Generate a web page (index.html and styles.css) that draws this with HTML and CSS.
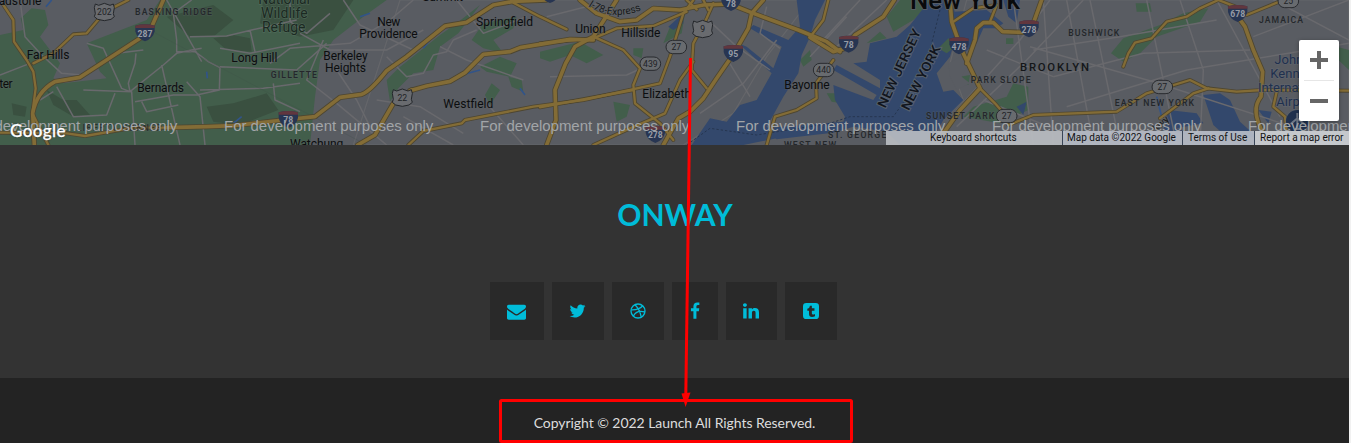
FILE: index.html
```html
<!DOCTYPE html>
<html lang="en">
<head>
<meta charset="utf-8">
<title>Onway</title>
<link rel="stylesheet" href="styles.css">
</head>
<body>
<div class="page">
<section class="map">
<svg class="map-canvas" viewBox="0 0 4047 435" preserveAspectRatio="none">
<defs>
<g id="major">
<path d="M490 0L455 80L420 115L240 232L165 245Q110 275 98 340L103 435"/>
<path d="M500 383L620 380L700 377L850 360L945 350L1020 292L1085 283Q1110 275 1160 212L1220 170L1335 78L1400 67L1480 15L1540 4L1640 0"/>
<path d="M1230 272L1280 258L1350 244L1395 218L1450 163L1530 155L1560 143L1710 118L1780 120"/>
<path d="M1073 435L1125 405L1180 310L1235 270"/>
<path d="M1850 0L1780 110L1725 140L1697 190L1665 270L1668 360L1640 435"/>
<path d="M1740 0L1790 40L1860 65L1910 60L1960 25L2040 30L2110 15L2190 12L2260 40L2395 90L2480 125L2520 155"/>
<path d="M2290 0L2255 40L2245 85L2205 155L2150 235L2110 295L2070 335L2035 355L1990 435"/>
<path d="M2430 112L2500 155L2535 145L2565 105L2650 50L2683 0"/>
<path d="M2850 0L2855 65L2885 150L2940 265L2880 330L2830 400"/>
<path d="M2900 190L2925 120L2930 85L2950 68L2980 68L3008 95L3090 98L3125 0"/>
<path d="M3692 20L3735 80L3760 150L3788 215L3783 290Q3750 330 3790 400"/>
</g>
<g id="minor">
<path d="M10 15L40 60L42 125L80 180L100 215L107 265L97 340L145 435"/><path d="M100 190L160 160L220 103L260 100L315 35L385 0"/><path d="M0 398L200 400L255 408L400 383L500 383"/>
<path d="M1540 8L1620 50L1700 88"/><path d="M1225 435L1270 393L1385 370L1395 360L1600 320L1750 300L1980 250L2010 170L2050 40L2080 0"/>
<path d="M1620 322L1900 270"/><path d="M1620 130L1780 115L1850 85L1960 78L2060 35"/><path d="M1780 110L1870 150L1920 205L1900 255L1905 310L1980 370L2020 420"/><path d="M2140 10L2120 55L2080 130L2075 210L2120 265"/><path d="M2080 185L2040 240L1995 340L1890 385L1780 435"/><path d="M2300 435L2325 350L2390 330L2450 295L2448 250L2500 180"/><path d="M2060 0L2090 28M2110 0L2125 30"/>
<path d="M2430 112L2470 60L2485 0"/><path d="M2940 265L2985 310L3020 350"/><path d="M3025 375L3100 345L3350 335L3440 280L3570 240L3620 265L3710 275L3790 270L4047 272"/><path d="M3480 355L3580 280L3625 265"/><path d="M2860 65L2920 25L2990 15L2970 65"/><path d="M3370 200L3385 160L3405 128L3455 115L3500 65L3560 50L3600 25L3655 0L3720 25"/><path d="M3740 45L3850 0"/><path d="M3830 275L3820 320L3855 350L3860 400"/>
</g>
<g id="interstate"><path d="M-29-21Q0-29 29-21V-4Q24 18 0 26Q-24 18-29-4Z" fill="#273552"/><path d="M-29-14V-21Q0-29 29-21V-14Z" fill="#61363e"/></g>
<path id="usroute" d="M-27-23L-17-19L0-25L17-19L27-23L30-12L27 6L30 15L20 23L0 27L-20 23L-30 15L-27 6L-30-12Z" fill="#696b6f" stroke="#24272b" stroke-width="3"/>
<rect id="state" x="-31" y="-20" width="62" height="40" rx="20" fill="#686b6f" stroke="#292b2f" stroke-width="3"/>
<pattern id="blocks" width="126" height="112" patternUnits="userSpaceOnUse" patternTransform="rotate(-29)"><path d="M0 22H126M0 68L126 52M20 0V112M82 0L74 112M82 30L126 92"/></pattern>
<pattern id="streets" width="66" height="90" patternUnits="userSpaceOnUse" patternTransform="rotate(8)"><path d="M0 18H66M0 54L66 46M14 0V90M45 0L52 90M0 78L66 84"/></pattern>
</defs>
<rect width="4047" height="435" fill="#595c62"/>
<g class="street-grid"><path fill="url(#blocks)" d="M1200 0H2430L2300 170L2200 340L2050 435H1060Z"/><path fill="url(#streets)" d="M2900 0H4047V435H2750L2890 300L2850 190Z"/></g>
<g class="park">
<path d="M0 105L70 90L62 55L95 25L135 30L145 75L120 110L180 190L160 235L190 250L320 235L300 215L260 130L440 60L480 0H1160L1090 50L1000 120L960 180L945 290L930 435H0Z"/>
<path d="M1160 240L1195 205L1320 105L1370 70L1440 15L1375 100L1320 140L1300 210L1240 220L1195 265L1170 305Z"/>
<path d="M1415 120L1450 70L1550 50L1540 85L1480 120L1510 160L1450 145ZM1440 200L1500 170L1550 190L1530 230L1460 215ZM1525 230L1565 240L1570 275L1535 260ZM1455 285L1475 250L1500 270L1470 315ZM1620 155L1740 125L1810 165L1760 190L1710 165L1650 185L1620 175ZM1900 145L1930 145L1925 175L1900 165ZM1840 305L1890 315L1880 350L1850 365ZM2010 80L2055 40L2045 100L1990 130ZM2400 180L2430 150L2435 180L2410 200Z"/>
<path d="M2660 50L2700 0H2800L2740 60L2680 95ZM2600 130L2640 95L2660 115ZM2920 320L3020 290L3040 250L3085 260L3085 330L3000 370L2890 350ZM3333 160L3370 115L3480 75L3550 40L3625 25L3600 65L3470 110L3420 160L3370 185ZM3407 10L3450 10L3455 35L3410 35ZM4010 140L4047 150V210L4010 175ZM3018 115H3040V132H3018ZM2880 230L2910 225L2905 255L2880 245ZM2480 280L2520 280L2525 310L2495 305Z"/>
</g>
<g fill="#3a5040"><path d="M790 0H1060L1000 90L900 110L780 70ZM640 115L700 105L750 115L755 155L680 150ZM620 320L700 310L800 280L835 330L720 375L640 365ZM500 50L640 15L700 60L640 110L570 110ZM140 270L190 300L230 300L270 345L220 350L160 315ZM35 310L80 320L75 350L40 345Z"/></g>
<g class="water">
<path d="M2390 0H2475L2445 60L2430 110L2405 165L2395 220L2350 290L2320 345L2300 380L2330 415L2230 435H2075L2130 355L2180 365L2220 315L2270 300L2315 220L2215 130L2240 140L2320 205L2345 140L2250 85L2260 75L2365 120L2400 80Z"/>
<path d="M2790 0H2860L2870 100L2850 170L2810 220L2830 275L2860 270L2890 300L2830 360L2790 435H2700L2660 395L2560 380L2500 398L2440 405L2330 418L2290 385L2530 365L2535 350L2505 300L2500 255L2620 300L2630 285L2500 210L2510 195L2640 265L2640 240L2560 190L2600 185L2610 130L2690 110L2730 75Z"/>
<path d="M2860 35L2960 30L3010 70L2990 85L2950 85L2930 130L2890 160L2860 120ZM3010 0H3060L3050 70L3025 50ZM3050 320L3080 305L3070 345ZM3505 330L3590 340L3610 370L3530 385L3590 410L3490 390ZM3610 285L3660 280L3690 300L3720 365L3770 410L3690 420L3640 375ZM3775 330L3815 335L3805 370ZM2005 80L2050 40L2050 70L2020 90Z"/>
<path d="M138 20L155 0M1080 50L1110 40M1270 145L1290 120M1385 225L1440 210M1560 265L1575 285M620 215L622 235M700 370L725 350M3470 290L3490 370" fill="none" stroke="#315489" stroke-width="5"/>
</g>
<path d="M2845 190L2890 165L2900 200L2885 230L2910 250L2870 270L2850 230Z" fill="#595c62"/>
<path class="park" d="M2815 145L2845 115L2880 130L2840 160Z"/>
<path d="M2820 30L2805 90L2785 170L2715 300L2680 350H2550L2490 370L2270 405L2130 385L2060 435" fill="none" stroke="#263650" stroke-width="3" stroke-dasharray="7 6"/>
<g class="local">
<path d="M60 0L75 110L125 165L185 220L245 225L350 160L430 150M0 225L90 190M260 130L310 145L365 265L390 275L385 250L405 190L408 160M250 270L395 275L405 435M390 275L490 195L530 160L575 150L605 145M575 0L520 40L530 120L530 155L585 155L625 185L660 203L658 270L590 285L520 285L405 305M500 0L605 185M485 195L540 435M560 245L600 290L615 435M425 305L440 335L535 315M750 90L765 155M570 110L680 108L755 90L890 60M660 200L890 210L980 130M600 270L790 265L900 250M820 250L825 300L900 335M170 260L220 350L320 345L345 280M120 300L160 275M660 145L750 160L900 130M870 0L870 65L920 100L990 40"/>
<path d="M810 190L870 145L1050 130L1170 60L1240 0M900 100L990 150L1160 150L1270 90M970 120L920 240L1010 310L1160 435M1000 195L1070 300L1110 380M1030 0L1080 75L1240 150M1160 170L1220 230L1270 220L1300 165L1340 155L1360 120L1430 90M1320 140L1400 180L1570 240M1130 300L1260 320L1390 400M1370 0L1450 100L1580 50M1210 350L1360 435M1460 310L1570 435M1640 50L1800 10M1650 230L1880 225L1980 180M2100 340L2230 250L2330 120M2120 55L2210 140L2310 210M2300 20L2280 100L2340 145M2180 175L2250 290"/>
<path d="M2460 130L2580 0M2430 170L2540 50M2510 140L2660 0M2870 330L3060 120L3150 0M2870 380L3080 180L3250 0M2950 300L3170 390M2960 150L3160 230M3090 140L3460 245L4047 435M3040 0L3100 435M3130 0L3160 435M3200 0L3280 435M3270 0L3360 435M3440 0L3530 435M3100 150L3360 110L3650 60M3160 230L3430 160L3750 150M3200 320L3560 210L4047 130M3540 0L3610 210L3600 435M3650 0L3840 350M3820 0L4047 120M3760 110L4047 0"/>
</g>
<path d="M430 80L1100 435" fill="none" stroke="#3d4c47" stroke-width="2" opacity=".35"/>
<use href="#major" class="major-case"/><use href="#minor" class="minor-case"/><use href="#major" class="major-fill"/><use href="#minor" class="minor-fill"/>
<g class="shields">
<use href="#usroute" x="313" y="35"/><text x="313" y="46">202</text><use href="#usroute" x="1207" y="292"/><text x="1207" y="303">22</text><use href="#usroute" x="2108" y="86"/><text x="2108" y="97">9</text>
<use href="#state" x="2029" y="141"/><text x="2029" y="151">27</text><use href="#state" x="1951" y="191"/><text x="1951" y="201">439</text><use href="#state" x="2471" y="210"/><text x="2471" y="220">440</text><use href="#state" x="3020" y="348"/><text x="3020" y="358">27</text><use href="#state" x="3487" y="261"/><text x="3487" y="271">27</text><use href="#state" x="3865" y="3"/><text x="3865" y="13">25</text>
</g>
<g class="shields interstate">
<use href="#interstate" x="435" y="98"/><text x="435" y="111">287</text><use href="#interstate" x="865" y="358"/><text x="865" y="370">78</text><use href="#interstate" x="1650" y="-17"/><use href="#interstate" x="2193" y="7"/><text x="2193" y="20">78</text><use href="#interstate" x="2200" y="160"/><text x="2200" y="172">95</text><use href="#interstate" x="1966" y="403"/><text x="1966" y="415">278</text><use href="#interstate" x="2546" y="132"/><text x="2546" y="144">78</text><use href="#interstate" x="2877" y="137"/><text x="2877" y="150">478</text><use href="#interstate" x="3087" y="86"/><text x="3087" y="98">278</text><use href="#interstate" x="3713" y="40"/><text x="3713" y="52">678</text>
</g>
<g class="town">
<text x="-4" y="15" textLength="128">adstone</text><text x="80" y="177" textLength="128">Far Hills</text><text x="-2" y="264" textLength="40">ter</text><text x="412" y="276" textLength="140">Bernards</text><text x="694" y="186" textLength="138">Long Hill</text><text x="870" y="444" textLength="160">Watchung</text><text x="1132" y="78" textLength="69">New</text><text x="1078" y="114" textLength="175">Providence</text><text x="970" y="180" textLength="133">Berkeley</text><text x="975" y="216" textLength="123">Heights</text><text x="1267" y="4" textLength="122">Summit</text><text x="1428" y="78" textLength="171">Springfield</text><text x="1330" y="324" textLength="150">Westfield</text><text x="1726" y="99" textLength="91">Union</text><text x="1864" y="111" textLength="117">Hillside</text><text x="1927" y="294" textLength="146">Elizabeth</text><text x="2353" y="267" textLength="136">Bayonne</text>
</g>
<g class="district">
<text x="405" y="45" textLength="231">BASKING RIDGE</text><text x="812" y="234" textLength="139">GILLETTE</text><text x="3205" y="107" textLength="153">BUSHWICK</text><text x="3777" y="69" textLength="132">JAMAICA</text><text x="2912" y="249" textLength="180">PARK SLOPE</text><text x="2778" y="357" textLength="205">SUNSET PARK</text><text x="2484" y="414" textLength="175">ST. GEORGE</text><text x="2352" y="445" textLength="156">WEST NEW</text><text x="3344" y="318" textLength="238">EAST NEW YORK</text><text x="230" y="392" textLength="255" opacity=".8">LIBERTY CORNER</text><text x="3060" y="214" textLength="207" class="borough">BROOKLYN</text>
</g>
<g class="reserve"><text x="775" y="12" textLength="155">National</text><text x="783" y="54" textLength="140">Wildlife</text><text x="786" y="96" textLength="130">Refuge</text></g>
<g class="airport"><text x="3823" y="192">John F.</text><text x="3811" y="234">Kennedy</text><text x="3774" y="276">International</text><text x="3829" y="318">Airport</text><circle cx="3892" cy="364" r="34"/><path d="M3892 339V390M3872 372L3892 355L3912 372M3884 387H3900" stroke="#6f7785" stroke-width="6" fill="none"/></g>
<text class="city" x="2730" y="26" textLength="330" lengthAdjust="spacingAndGlyphs">New York</text>
<g class="harbor"><text transform="translate(2656 326) rotate(-65)" textLength="255" lengthAdjust="spacingAndGlyphs">NEW JERSEY</text><text transform="translate(2726 334) rotate(-63)" textLength="213" lengthAdjust="spacingAndGlyphs">NEW YORK</text></g>
<path id="express" d="M1765 18Q1840 65 1925 30" fill="none"/><text class="road-name"><textPath href="#express" textLength="166">I-78-Express</textPath></text>
<text class="road-name" transform="translate(3470 397) rotate(-43)">kwy</text>
</svg>
<div class="watermarks"><span>For development purposes only</span><span>For development purposes only</span><span>For development purposes only</span><span>For development purposes only</span><span>For development purposes only</span><span>For development purposes only</span></div>
<span class="google">Google</span>
<div class="attribution"><span class="keys">Keyboard shortcuts</span><span class="data">Map data ©2022 Google</span><span class="terms">Terms of Use</span><span class="report">Report a map error</span></div>
<div class="zoom-control"><b class="plus"></b><i></i><b></b></div>
</section>
<footer>
<div class="contact">
<h1>ONWAY</h1>
<nav class="social">
<a class="mail"><svg viewBox="0 0 1792 1792"><path d="M1792 710v794q0 66-47 113t-113 47H160q-66 0-113-47T0 1504V710q44 49 101 87 362 246 497 345 57 42 92.500 65.500T785 1256t110 24h2q51 0 110-24t94.500-48.500T1194 1142q170-123 498-345 57-39 100-87zm0-294q0 79-49 151t-122 123q-376 261-468 325-10 7-42.500 30.500t-54 38-52 32.500-57.500 27-50 9h-2q-23 0-50-9t-57.500-27-52-32.500-54-38T639 1015q-91-64-262-182.500T172 690q-62-42-117-115.500T0 438q0-78 41.500-130T160 256h1472q65 0 112.500 47t47.500 113z"/></svg></a>
<a class="twitter"><svg viewBox="0 0 1664 1792"><path d="M1620 408q-67 98-162 167 1 14 1 42 0 130-38 259.500T1305.500 1125 1121 1335.500t-258 146-323 54.500q-271 0-496-145 35 4 78 4 225 0 401-138-105-2-188-64.500T221 1033q33 5 61 5 43 0 85-11-112-23-185.500-111.500T108 710v-4q68 38 146 41-66-44-105-115t-39-154q0-88 44-163 121 149 294.500 238.500T820 653q-8-38-8-74 0-134 94.500-228.500T1135 256q140 0 236 102 109-21 205-78-37 115-142 178 93-10 186-50z"/></svg></a>
<a class="dribbble"><svg viewBox="0 0 24 24" fill="none" stroke="currentColor" stroke-width="2"><circle cx="12" cy="12" r="10.5"/><path d="M7.500 2.500C11.500 6.500 15.500 13 17 21.500M2 10.200C9 10.500 15 8.500 19 4.500M5 20C8 13 15 11.500 22.500 13.500"/></svg></a>
<a class="facebook"><svg viewBox="0 0 1024 1792"><path d="M959 12v264H802q-86 0-116 36t-30 108v189h293l-39 296H656v759H350V905H95V609h255V391q0-186 104-288.500T731 0q147 0 228 12z" transform="translate(0 16)"/></svg></a>
<a class="linkedin"><svg viewBox="0 0 1536 1536"><path d="M349 497v991H19V497h330zm21-306q1 73-50.500 122T184 362h-2q-82 0-132-49T0 191q0-74 51.500-122.500T186 20t133 48.500T370 191zm1166 729v568h-329V958q0-105-40.500-164.500T1040 734q-63 0-105.500 34.500T871 854q-11 30-11 81v553H531q2-399 2-647t-1-296l-1-48h329v144h-2q20-32 41-56t56.500-52 87-43.500T1157 474q171 0 275 113.500T1536 920z"/></svg></a>
<a class="tumblr"><svg viewBox="0 0 24 24"><path fill-rule="evenodd" d="M5 0H19Q24 0 24 5V19Q24 24 19 24H5Q0 24 0 19V5Q0 0 5 0ZM10.500 4Q10 8 6.500 8.600V11.500H9V16.500Q9 21 13.500 21Q16 21 18 19.800V16.500Q16.500 17.400 15 17.400Q13.300 17.400 13.300 15.700V11.500H17.200V8H13.300V4Z"/></svg></a>
</nav>
</div>
<div class="copyright">Copyright © 2022 Launch All Rights Reserved.</div>
</footer>
</div>
<svg class="annotation" viewBox="0 0 1351 443"><rect x="500.500" y="400.500" width="351" height="41" rx="1"/><path d="M690.500 58L685.800 395"/><path class="arrowhead" d="M681.500 393.500L690.500 392.500L685.600 407Z"/></svg>
</body>
</html>
```
FILE: styles.css
```css
* { box-sizing: border-box; }
body { margin: 0; width: 1351px; height: 443px; overflow: hidden; background: #f1f1f1; font-family: Lato, sans-serif; }
.page { width: 1349px; height: 443px; }
.map { position: relative; height: 145px; overflow: hidden; font-family: Roboto, sans-serif; }
.map-canvas { display: block; width: 1349px; height: 145px; }
.park { fill: #425e4b; }
.water { fill: #33486c; }
.street-grid { stroke: #65666a; stroke-width: 3.500; fill: none; }
.local { fill: none; stroke: #69696d; stroke-width: 4.500; stroke-linejoin: round; }
.major-case, .minor-case, .major-fill, .minor-fill { fill: none; stroke-linejoin: round; stroke-linecap: round; }
.major-case { stroke: #4e4630; stroke-width: 16; }
.minor-case { stroke: #4e4630; stroke-width: 12; }
.major-fill { stroke: #836c36; stroke-width: 11; }
.minor-fill { stroke: #836c36; stroke-width: 7; }
.shields { font-size: 26px; text-anchor: middle; fill: #202226; }
.interstate { fill: #969ba5; font-weight: 700; }
.town { font-size: 36px; fill: #0c0d0f; stroke: #5c606555; stroke-width: 5; paint-order: stroke; }
.district { font-size: 26px; font-weight: 500; fill: #24272b; stroke: #5c606555; stroke-width: 4; paint-order: stroke; }
.borough { font-size: 34px; fill: #141619; }
.reserve { font-size: 42px; fill: #1b2922; stroke: #5c776788; stroke-width: 4; paint-order: stroke; }
.airport { font-size: 39px; fill: #1f304e; stroke: #646a7588; stroke-width: 4; paint-order: stroke; }
.city { font-size: 76px; font-weight: 500; fill: #090a0c; stroke: #5c6065; stroke-width: 5; paint-order: stroke; }
.harbor { font-size: 39px; font-weight: 500; fill: #11151d; stroke: #55606f; stroke-width: 6; paint-order: stroke; }
.road-name { font-size: 31px; fill: #181a1c; stroke: #5c6065; stroke-width: 5; paint-order: stroke; }
.watermarks { position: absolute; left: -32px; top: 117px; display: grid; grid-template-columns: repeat(6, 256px); font: 15px/18px "Liberation Sans", Arial, sans-serif; letter-spacing: -.03px; color: #a2a5a8; white-space: nowrap; }
.google { position: absolute; left: 10px; top: 121px; color: #fff; font: 500 17px/20px Lato, sans-serif; letter-spacing: .4px; -webkit-text-stroke: .25px #fff; text-shadow: 0 0 2px #333; }
.attribution { position: absolute; right: 0; bottom: 0; width: 463px; height: 14px; display: grid; grid-template-columns: 176px 120px 72px 95px; font-size: 10px; line-height: 14px; color: #101113; white-space: nowrap; }
.attribution span { background: #b9bec8e8; }
.attribution span + span { border-left: 1px solid #3a4658; padding-left: 4px; }
.attribution .keys { padding-left: 44px; background: #bbbec3e8; }
.attribution .terms, .attribution .report { padding-left: 5px; }
.attribution .report { background: #c5c8cc; }
.zoom-control { position: absolute; left: 1299px; top: 40px; width: 40px; height: 81px; display: grid; grid-template-rows: 40px 1px 40px; place-items: center; background: #fff; border-radius: 2px; box-shadow: 0 1px 4px #0005; }
.zoom-control i { width: 30px; height: 1px; background: #e6e6e6; }
.zoom-control b { width: 18px; height: 4px; background: #666; }
.plus { position: relative; }
.plus::after { content: ""; position: absolute; left: 7px; top: -7px; width: 4px; height: 18px; background: #666; }
.contact { height: 233px; padding-top: 51px; background: #333; text-align: center; }
h1 { margin: 0; height: 86px; padding-left: 1px; font-size: 30px; line-height: 36px; font-weight: 700; color: #00bcd9; }
.social { display: flex; gap: 8px; margin-left: 490px; }
.social a { height: 58px; background: #292929; color: #00bcd9; display: flex; align-items: center; justify-content: center; padding-right: 1px; }
.social svg { display: block; width: 16px; height: 16px; fill: currentColor; }
.social .mail { width: 54px; }
.mail svg { width: 19px; height: 19px; }
.social .twitter, .social .dribbble, .social .tumblr { width: 52px; }
.twitter svg { width: 17px; height: 18px; }
.social .dribbble { padding-right: 0; }
.social .dribbble svg { fill: none; }
.social .facebook { width: 46px; padding-right: 0; }
.facebook svg { width: 10px; height: 18px; }
.social .linkedin { width: 51px; }
.social .tumblr { padding-right: 0; }
.copyright { height: 65px; padding-top: 35px; background: #232323; color: #ddd; font-size: 14px; line-height: 20px; letter-spacing: -.05px; text-align: center; }
.annotation { position: absolute; left: 0; top: 0; width: 1351px; height: 443px; fill: none; stroke: #f00; stroke-width: 3; }
.arrowhead { fill: #f00; stroke: none; }
```
